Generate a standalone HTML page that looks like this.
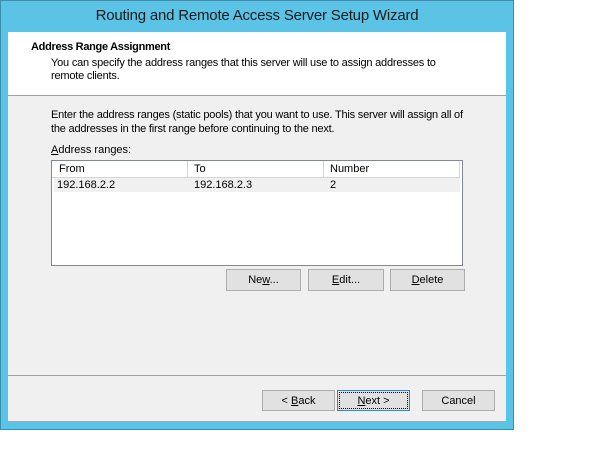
<html><head><style>
body{margin:0;width:614px;height:460px;background:#fff;position:relative;overflow:hidden;font-family:"Liberation Sans",sans-serif;font-size:11px;color:#000}
.a{position:absolute}
.btn{position:absolute;background:#e1e1e1;border:1px solid #adadad;box-sizing:border-box;text-align:center;line-height:20px;font-size:11px}
u{text-decoration:underline}
</style></head><body>
<div class="a" style="left:0;top:0;width:514px;height:430px;background:#5bc3e6;border:1px solid #3a8fb0;box-sizing:border-box"></div>
<div class="a" style="left:0;top:7px;width:514px;text-align:center;font-size:15px;letter-spacing:-0.2px;color:#1a1a1a">Routing and Remote Access Server Setup Wizard</div>
<div class="a" style="left:8px;top:32px;width:498px;height:389px;background:#f0f0f0"></div>
<div class="a" style="left:8px;top:32px;width:498px;height:63px;background:#fff;border-bottom:1px solid #a0a0a0"></div>
<div class="a" style="left:31px;top:41px;font-weight:bold;letter-spacing:-0.3px">Address Range Assignment</div>
<div class="a" style="left:51px;top:57px;line-height:13px;letter-spacing:-0.2px">You can specify the address ranges that this server will use to assign addresses to<br>remote clients.</div>
<div class="a" style="left:51px;top:108px;line-height:14px;letter-spacing:-0.2px">Enter the address ranges (static pools) that you want to use. This server will assign all of<br>the addresses in the first range before continuing to the next.</div>
<div class="a" style="left:51px;top:144px"><u>A</u>ddress ranges:</div>
<div class="a" style="left:51px;top:160px;width:412px;height:106px;background:#fff;border:1px solid #828790;box-sizing:border-box">
<div class="a" style="left:0;top:0;width:408px;height:16px;border-bottom:1px solid #d5d5d5"></div>
<div class="a" style="left:135px;top:0;height:16px;border-left:1px solid #d5d5d5"></div>
<div class="a" style="left:271px;top:0;height:16px;border-left:1px solid #d5d5d5"></div>
<div class="a" style="left:407px;top:0;height:16px;border-left:1px solid #d5d5d5"></div>
<div class="a" style="left:7px;top:2px">From</div><div class="a" style="left:142px;top:2px">To</div><div class="a" style="left:278px;top:2px">Number</div>
<div class="a" style="left:2px;top:17px;width:406px;height:14px;background:#f0f0f0"></div>
<div class="a" style="left:5px;top:18px">192.168.2.2</div><div class="a" style="left:142px;top:18px">192.168.2.3</div><div class="a" style="left:278px;top:18px">2</div>
</div>
<div class="btn" style="left:226px;top:269px;width:75px;height:22px">Ne<u>w</u>...</div>
<div class="btn" style="left:308px;top:269px;width:76px;height:22px"><u>E</u>dit...</div>
<div class="btn" style="left:390px;top:269px;width:75px;height:22px"><u>D</u>elete</div>
<div class="a" style="left:8px;top:375px;width:498px;border-top:1px solid #a0a0a0"></div>
<div class="btn" style="left:262px;top:390px;width:73px;height:21px">&lt; <u>B</u>ack</div>
<div class="btn" style="left:337px;top:390px;width:73px;height:21px;border-color:#4a7eb0;outline:1px dotted #000;outline-offset:-3px"><u>N</u>ext &gt;</div>
<div class="btn" style="left:422px;top:390px;width:73px;height:21px">Cancel</div>
</body></html>
